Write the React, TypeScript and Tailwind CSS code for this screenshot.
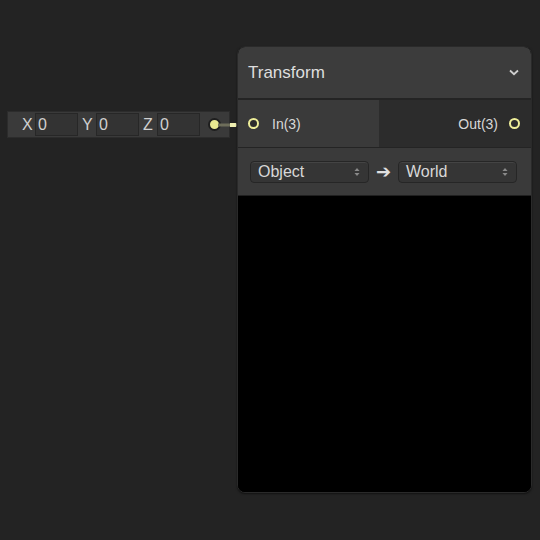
import React from "react";

const font = { fontFamily: '"Liberation Sans", Arial, sans-serif' };

function UpDown() {
  return (
    <svg width="6" height="10" viewBox="0 0 6 10" className="shrink-0">
      <path d="M0.5 4 L3 1 L5.5 4 Z" fill="#8a8a8a" />
      <path d="M0.5 6 L3 9 L5.5 6 Z" fill="#8a8a8a" />
    </svg>
  );
}

function Select({ label }: { label: string }) {
  return (
    <div className="flex items-center justify-between w-[119px] h-[22px] rounded-[4px] bg-[#353535] border border-[#262626] shadow-[inset_0_1px_0_#444] pl-[7px] pr-[8px]">
      <span className="text-[16px] leading-none text-[#d8d8d8]">{label}</span>
      <UpDown />
    </div>
  );
}

function VecInput() {
  return (
    <div className="w-[43px] h-[23px] bg-[#333333] border border-[#272727] flex items-center pl-[2px] text-[16px] leading-none text-[#d0d0d0]">
      0
    </div>
  );
}

export default function App() {
  return (
    <div className="relative w-[540px] h-[540px] bg-[#232323] overflow-hidden" style={font}>
      {/* vector widget */}
      <div className="absolute left-[7px] top-[111px] w-[223px] h-[27px] bg-[#3a3a3a] border border-[#2c2c2c] flex items-center">
        <span className="ml-[14px] w-[13px] text-[16px] leading-none text-[#d0d0d0]">X</span>
        <VecInput />
        <span className="ml-[4px] w-[14px] text-[16px] leading-none text-[#d0d0d0]">Y</span>
        <VecInput />
        <span className="ml-[4px] w-[14px] text-[16px] leading-none text-[#d0d0d0]">Z</span>
        <VecInput />
        <div className="ml-[8px] w-[9px] h-[9px] rounded-full bg-[#e8e890] border-2 border-[#1e1e1e] box-content" />
      </div>

      {/* connection */}
      <svg className="absolute left-[218px] top-[120px]" width="34" height="10">
        <rect x="0" y="3.5" width="32" height="3" fill="#6d6d5a" />
        <rect x="12" y="3" width="6" height="4" fill="#eeeeb0" />
      </svg>

      {/* node */}
      <div className="absolute left-[237px] top-[46px] w-[295px] h-[447px] rounded-[8px] bg-black border border-[#2a2a2a] overflow-hidden flex flex-col shadow-[0_1px_2px_rgba(0,0,0,0.5)]">
        <div className="h-[51px] bg-[#3c3c3c] flex items-center justify-between pl-[10px] pr-[12px] shrink-0">
          <span className="text-[17px] leading-none text-[#dedede]">Transform</span>
          <svg width="10" height="7" viewBox="0 0 10 7">
            <path d="M1 1.5 L5 5.2 L9 1.5" stroke="#cfcfcf" strokeWidth="1.8" fill="none" />
          </svg>
        </div>
        <div className="h-[2px] bg-[#242424] shrink-0" />
        <div className="h-[47px] flex shrink-0">
          <div className="w-[141px] bg-[#3a3a3a] flex items-center pl-[10px]">
            <div className="w-[11px] h-[11px] rounded-full border-2 border-[#eeee99] bg-[#2c2c2c]" />
            <span className="ml-[13px] text-[14px] leading-none text-[#d8d8d8]">In(3)</span>
          </div>
          <div className="flex-1 bg-[#2c2c2c] flex items-center justify-end pr-[11px]">
            <span className="text-[14px] leading-none text-[#d8d8d8]">Out(3)</span>
            <div className="ml-[11px] w-[11px] h-[11px] rounded-full border-2 border-[#eeee99] bg-[#2c2c2c]" />
          </div>
        </div>
        <div className="h-[1px] bg-[#242424] shrink-0" />
        <div className="h-[47px] bg-[#3a3a3a] flex items-center pl-[12px] shrink-0">
          <Select label="Object" />
          <span className="w-[29px] text-center text-[18px] leading-none text-[#e0e0e0]" style={{ fontFamily: '"DejaVu Sans", sans-serif' }}>➔</span>
          <Select label="World" />
        </div>
        <div className="h-[1px] bg-[#202020] shrink-0" />
        <div className="flex-1 bg-black" />
      </div>
    </div>
  );
}
